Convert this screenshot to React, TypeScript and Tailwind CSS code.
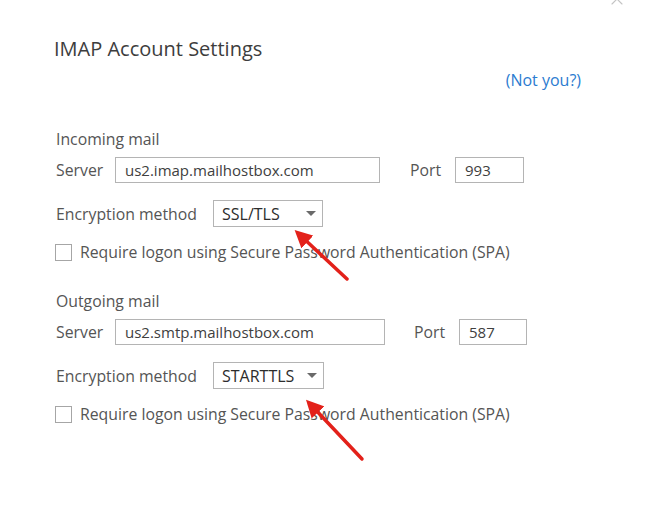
import { X } from 'lucide-react';

interface MailSectionProps {
    title: string;
    server: string;
    port: string;
    encryption: string;
    serverWidth: string;
    portGap: string;
    portWidth: string;
    selectWidth: string;
}

function MailSection({ title, server, port, encryption, serverWidth, portGap, portWidth, selectWidth }: MailSectionProps) {
    return (
        <div className="flex flex-col">
            <div className="h-[20px] leading-[20px]">{title}</div>

            {/* Server + port */}
            <div className="flex items-center mt-[8px] h-[26px]">
                <span className="w-[59px] leading-[20px]">Server</span>
                <div className={`${serverWidth} h-[26px] border border-[#b4b4b4] bg-white px-[9px] flex items-center text-[15px] text-[#404040]`}>
                    {server}
                </div>
                <span className={`${portGap} w-[45px] leading-[20px]`}>Port</span>
                <div className={`${portWidth} h-[26px] border border-[#b4b4b4] bg-white px-[9px] flex items-center text-[15px] text-[#404040]`}>
                    {port}
                </div>
            </div>

            {/* Encryption dropdown */}
            <div className="flex items-center mt-[17px] h-[27px]">
                <span className="w-[157px] leading-[20px]">Encryption method</span>
                <div className={`${selectWidth} h-[27px] border border-[#b4b4b4] bg-white pl-[8px] pr-[6px] flex items-center justify-between text-[16px] text-[#2c2c2c]`}>
                    <span>{encryption}</span>
                    <svg width="10" height="5" viewBox="0 0 10 5">
                        <path d="M0 0 L10 0 L5 5 Z" fill="#6a6a6a" />
                    </svg>
                </div>
            </div>

            {/* SPA checkbox */}
            <div className="flex items-center mt-[15px] h-[20px]">
                <div className="ml-[-1px] w-[17px] h-[17px] border border-[#a6a6a6] bg-white" />
                <span className="ml-[8px] leading-[20px]">Require logon using Secure Password Authentication (SPA)</span>
            </div>
        </div>
    );
}

export default function App() {
    return (
        <div
            className="relative w-[651px] h-[507px] bg-white overflow-hidden text-[15.8px] text-[#555555]"
            style={{ fontFamily: '"Open Sans", "Noto Sans", sans-serif' }}
        >
            {/* Close button, mostly cut off at the top */}
            <X className="absolute right-[24px] top-[-11px] text-[#c4c4c4]" size={20} strokeWidth={1.4} />

            <div className="pl-[54px] pt-[35px]">
                <h1 className="text-[20px] leading-[28px] text-[#3d3d3d]">IMAP Account Settings</h1>
            </div>

            <div className="flex justify-end pr-[70px] mt-[7px]">
                <a className="text-[16px] text-[#2b7bd0] leading-[20px]">(Not you?)</a>
            </div>

            <div className="pl-[56px] mt-[39px] flex flex-col">
                <MailSection
                    title="Incoming mail"
                    server="us2.imap.mailhostbox.com"
                    port="993"
                    encryption="SSL/TLS"
                    serverWidth="w-[265px]"
                    portGap="ml-[30px]"
                    portWidth="w-[69px]"
                    selectWidth="w-[110px]"
                />
                <div className="mt-[29px]">
                    <MailSection
                        title="Outgoing mail"
                        server="us2.smtp.mailhostbox.com"
                        port="587"
                        encryption="STARTTLS"
                        serverWidth="w-[270px]"
                        portGap="ml-[29px]"
                        portWidth="w-[68px]"
                        selectWidth="w-[111px]"
                    />
                </div>
            </div>

            {/* Red annotation arrows */}
            <svg className="absolute inset-0 pointer-events-none" width="651" height="507">
                <defs>
                    <marker id="head" markerWidth="5" markerHeight="5" refX="2.5" refY="2.5" orient="auto">
                        <path d="M0 0 L5 2.5 L0 5 Z" fill="#e3211a" />
                    </marker>
                </defs>
                <line x1="347" y1="279" x2="301" y2="236" stroke="#e3211a" strokeWidth="3.5" strokeLinecap="round" markerEnd="url(#head)" />
                <line x1="362" y1="459" x2="312" y2="406" stroke="#e3211a" strokeWidth="3.5" strokeLinecap="round" markerEnd="url(#head)" />
            </svg>
        </div>
    );
}
